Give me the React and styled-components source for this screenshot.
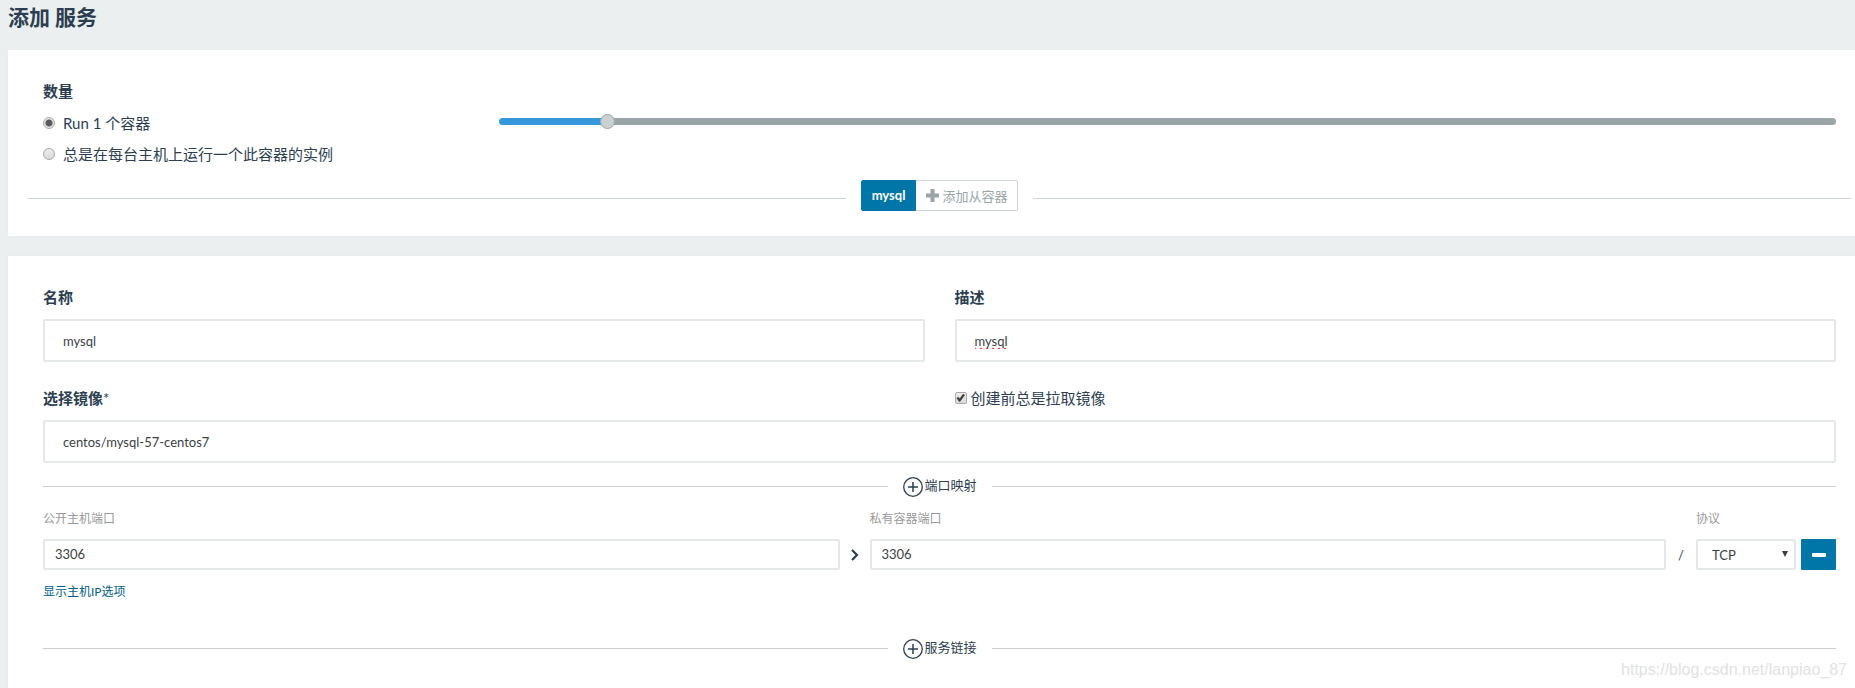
import React, { useState } from 'react';
import styled, { createGlobalStyle } from 'styled-components';

const GlobalStyle = createGlobalStyle`
  *, *::before, *::after {
    box-sizing: border-box;
  }

  body {
    margin: 0;
    background: #ebeff0;
    color: #2c3e50;
    font-family: Lato, "Noto Sans CJK SC", sans-serif;
    font-size: 15px;
    line-height: 20px;
  }

  button, input, select {
    margin: 0;
    font-family: inherit;
    color: inherit;
  }
`;

const Page = styled.main`
  position: relative;
  display: flex;
  flex-direction: column;
  gap: 20px;
  min-height: 100vh;
  padding-left: 8px;
`;

const Title = styled.h1`
  margin: 0;
  height: 30px;
  font-size: 21px;
  line-height: 34px;
  font-weight: bold;
`;

const Panel = styled.section`
  padding: 31px 19px 25px 35px;
  background: #fff;
  box-shadow: 0 0 1px #dfe4e5;
  flex-grow: ${({ $fill }) => ($fill ? 1 : 0)};
`;

const Label = styled.label`
  display: block;
  font-weight: bold;
`;

const Fieldset = styled.fieldset`
  min-width: 0;
  margin: 0;
  padding: 0;
  border: 0;
`;

const Legend = styled.legend`
  padding: 0;
  margin-bottom: 6px;
  font-weight: bold;
`;

const ScaleGrid = styled.div`
  display: grid;
  grid-template-columns: 1fr 3fr;
  column-gap: 10px;
`;

const Option = styled.label`
  display: flex;
  align-items: center;
  gap: 8px;
  height: 31px;
`;

const Radio = styled.input`
  appearance: none;
  width: 12px;
  height: 12px;
  border: 1px solid #a9a9a9;
  border-radius: 50%;
  background: linear-gradient(#ececec, #dadada);

  &:checked {
    background: radial-gradient(circle, #5a5a5a 3px, #e4e4e4 4px);
  }
`;

const Slider = styled.input`
  appearance: none;
  width: 100%;
  height: 29px;
  background: transparent;

  &::-webkit-slider-runnable-track {
    height: 7px;
    border-radius: 4px;
    background: linear-gradient(to right, #3498db var(--fill), #9aa5a8 var(--fill));
  }

  &::-webkit-slider-thumb {
    appearance: none;
    width: 15px;
    height: 15px;
    margin-top: -4px;
    border: 1px solid #9aa5a8;
    border-radius: 50%;
    background: #cbd0d3;
  }
`;

const Rule = styled.span`
  flex: 1;
  height: 1px;
  background: ${({ $color }) => $color || '#cccfcf'};
`;

const TabBar = styled.div`
  display: flex;
  align-items: center;
  gap: 15px;
  margin: 11px -15px 0;

  ${Rule} {
    margin-top: 5px;
  }
`;

const Tabs = styled.div`
  display: flex;
`;

const Tab = styled.button`
  display: flex;
  align-items: center;
  gap: 3px;
  height: 31px;
  padding: 0 10px 1px;
  border: 1px solid #0075a8;
  border-radius: 2px 0 0 2px;
  background: #0075a8;
  color: #fff;
  font-size: 13px;
  font-weight: bold;
`;

const AddTab = styled(Tab)`
  border-color: #cbd3d4;
  border-left: 0;
  border-radius: 0 2px 2px 0;
  background: #fff;
  color: #9aa5a8;
  font-weight: normal;
`;

const Columns = styled.div`
  display: grid;
  grid-template-columns: 1fr 1fr;
  column-gap: 30px;
  margin-bottom: ${({ $gap }) => $gap}px;
`;

const TextInput = styled.input`
  display: block;
  width: 100%;
  height: ${({ $small }) => ($small ? 31 : 43)}px;
  padding: ${({ $small }) => ($small ? '0 10px 2px' : '0 18px')};
  border: 2px solid #e4e8e8;
  border-radius: 2px;
  background: #fff;
  color: #3a3f44;
  font-size: 13px;
  outline: none;
`;

const SpelledInput = styled(TextInput)`
  text-decoration: underline wavy #e00 1px;
  text-decoration: spelling-error;
`;

const Field = styled.div`
  display: grid;
  row-gap: 12px;
`;

const Star = styled.span`
  font-weight: normal;
`;

const CheckLabel = styled.label`
  display: flex;
  align-items: center;
  gap: 4px;
`;

const Checkbox = styled.input`
  appearance: none;
  width: 12px;
  height: 12px;
  border: 1px solid #a9a9a9;
  border-radius: 2px;
  background: linear-gradient(#ececec, #dadada);

  &:checked::before {
    content: "";
    display: block;
    width: 10px;
    height: 10px;
    background: #404040;
    clip-path: polygon(10% 50%, 28% 38%, 42% 56%, 76% 8%, 94% 20%, 46% 88%, 36% 88%);
  }
`;

const SectionBar = styled.div`
  display: flex;
  align-items: center;
  gap: 15px;
  height: 20px;
  margin-top: ${({ $top }) => $top}px;
`;

const AddSection = styled.button`
  display: flex;
  gap: 2px;
  height: 20px;
  padding: 0;
  border: 0;
  background: none;
  font-size: 13px;
  line-height: 18px;

  svg {
    margin-top: 1px;
  }
`;

const PortGrid = styled.div`
  display: grid;
  grid-template-columns: 1fr 30px 1fr 30px 100px 40px;
  row-gap: 12px;
  align-items: center;
  margin: 15px 0 14px;
`;

const PortLabel = styled.label`
  grid-column: span 2;
  color: #999;
  font-size: 12px;
  line-height: 16px;
`;

const Separator = styled.span`
  display: flex;
  justify-content: center;
  font-size: 13px;
`;

const SelectBox = styled.div`
  position: relative;

  svg {
    position: absolute;
    top: 12px;
    right: 8px;
    pointer-events: none;
  }
`;

const Select = styled.select`
  appearance: none;
  display: block;
  width: 100%;
  height: 31px;
  padding: 0 14px;
  border: 2px solid #e4e8e8;
  border-radius: 2px;
  background: #fff;
  color: #3a3f44;
  font-size: 13px;
`;

const RemoveButton = styled.button`
  display: flex;
  align-items: center;
  justify-content: center;
  justify-self: end;
  width: 35px;
  height: 31px;
  padding: 0;
  border: 0;
  border-radius: 1px;
  background: #0075a8;
`;

const TextLink = styled.a`
  display: block;
  color: #00618b;
  font-size: 12px;
  line-height: 16px;
  text-decoration: none;
`;

const Watermark = styled.span`
  position: absolute;
  right: 8px;
  bottom: 8px;
  color: #e2e2e2;
  font-family: "Liberation Sans", sans-serif;
  font-size: 16px;
`;

const PlusIcon = () => (
  <svg width="13" height="13" viewBox="0 0 13 13" aria-hidden="true">
    <path d="M4.5 0h4v4.5H13v4H8.500V13h-4V8.500H0v-4h4.500z" fill="#9aa5a8" />
  </svg>
);

const PlusCircleIcon = () => (
  <svg width="20" height="20" viewBox="0 0 20 20" fill="none" stroke="#2c3e50" aria-hidden="true">
    <circle cx="10" cy="10" r="9.3" strokeWidth="1.3" />
    <path d="M10 5v10M5 10h10" strokeWidth="1.5" />
  </svg>
);

const ChevronIcon = () => (
  <svg width="8" height="12" viewBox="0 0 8 12" aria-hidden="true">
    <path d="M1 1l5 5-5 5" fill="none" stroke="#2c3e50" strokeWidth="2.2" />
  </svg>
);

const ArrowIcon = () => (
  <svg width="6" height="6" viewBox="0 0 6 6" aria-hidden="true">
    <path d="M0 0h6L3 6z" fill="#3a3f44" />
  </svg>
);

const MinusIcon = () => (
  <svg width="14" height="4" viewBox="0 0 14 4" aria-hidden="true">
    <rect width="14" height="4" rx="1" fill="#fff" />
  </svg>
);

const Section = ({ title, top }) => (
  <SectionBar $top={top}>
    <Rule />
    <AddSection type="button">
      <PlusCircleIcon />
      {title}
    </AddSection>
    <Rule />
  </SectionBar>
);

const MAX_SCALE = 13;

const App = () => {
  const [scale, setScale] = useState(1);
  const fill = `${(scale / MAX_SCALE) * 100}%`;

  return (
    <>
      <GlobalStyle />
      <Page>
        <Title>添加 服务</Title>

        <Panel>
          <Fieldset>
            <Legend>数量</Legend>
            <ScaleGrid>
              <Option>
                <Radio type="radio" name="mode" defaultChecked />
                Run {scale} 个容器
              </Option>
              <Slider
                type="range"
                min="0"
                max={MAX_SCALE}
                value={scale}
                aria-label="数量"
                style={{ '--fill': fill }}
                onChange={(e) => setScale(Number(e.target.value))}
              />
            </ScaleGrid>
            <Option>
              <Radio type="radio" name="mode" />
              总是在每台主机上运行一个此容器的实例
            </Option>
          </Fieldset>
          <TabBar>
            <Rule $color="#cbd3d4" />
            <Tabs>
              <Tab type="button">mysql</Tab>
              <AddTab type="button">
                <PlusIcon />
                添加从容器
              </AddTab>
            </Tabs>
            <Rule $color="#cbd3d4" />
          </TabBar>
        </Panel>

        <Panel $fill>
          <Columns $gap={26}>
            <Field>
              <Label htmlFor="name">名称</Label>
              <TextInput id="name" defaultValue="mysql" />
            </Field>
            <Field>
              <Label htmlFor="description">描述</Label>
              <SpelledInput id="description" defaultValue="mysql" />
            </Field>
          </Columns>

          <Columns $gap={12}>
            <Label htmlFor="image">
              选择镜像<Star>*</Star>
            </Label>
            <CheckLabel>
              <Checkbox type="checkbox" defaultChecked />
              创建前总是拉取镜像
            </CheckLabel>
          </Columns>
          <TextInput id="image" defaultValue="centos/mysql-57-centos7" />

          <Section title="端口映射" top={13} />
          <PortGrid>
            <PortLabel htmlFor="public-port">公开主机端口</PortLabel>
            <PortLabel htmlFor="private-port">私有容器端口</PortLabel>
            <PortLabel htmlFor="protocol">协议</PortLabel>
            <TextInput id="public-port" $small defaultValue="3306" />
            <Separator>
              <ChevronIcon />
            </Separator>
            <TextInput id="private-port" $small defaultValue="3306" />
            <Separator>/</Separator>
            <SelectBox>
              <Select id="protocol" defaultValue="tcp">
                <option value="tcp">TCP</option>
                <option value="udp">UDP</option>
              </Select>
              <ArrowIcon />
            </SelectBox>
            <RemoveButton type="button" aria-label="删除">
              <MinusIcon />
            </RemoveButton>
          </PortGrid>
          <TextLink href="#host-ip">显示主机IP选项</TextLink>

          <Section title="服务链接" top={38} />
        </Panel>

        <Watermark>https://blog.csdn.net/lanpiao_87</Watermark>
      </Page>
    </>
  );
};

export default App;
